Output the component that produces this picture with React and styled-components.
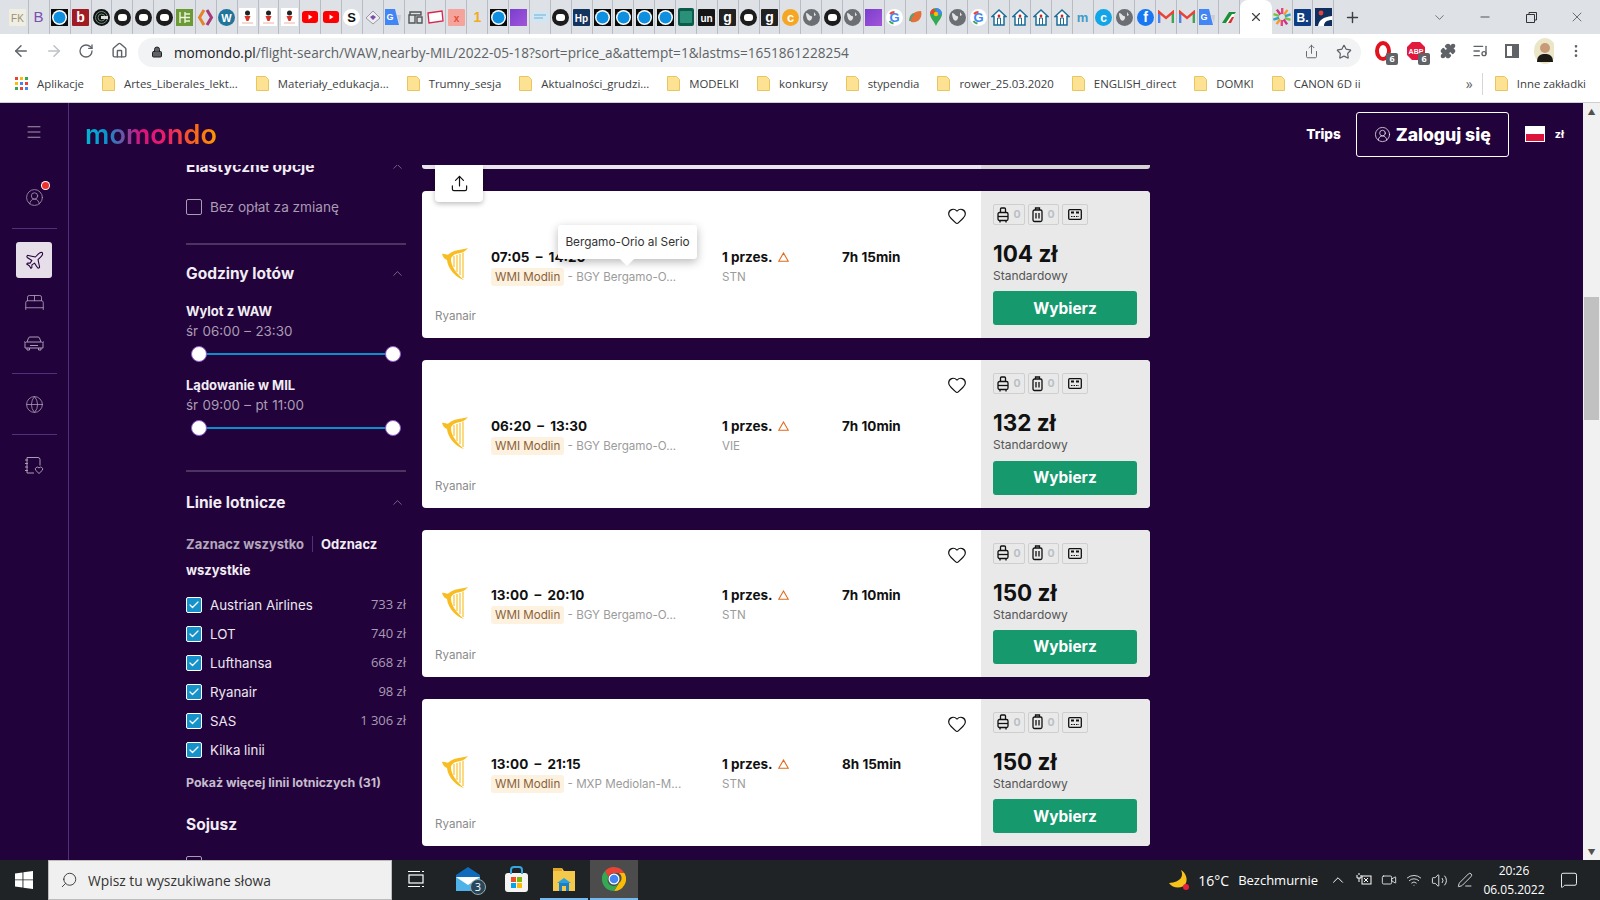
import React from 'react'
import styled, { createGlobalStyle } from 'styled-components'
import {
  ArrowLeft, ArrowRight, RotateCw, Home, Lock, Share, Star, Puzzle, ListMusic, MoreVertical,
  ChevronDown, ChevronUp, Minus, X, Plus, Menu, Plane, BedDouble, Globe, CircleUserRound,
  Heart, Upload, Check, Search, Video, Wifi, Volume2, PenLine, MessageSquare,
} from 'lucide-react'

const UI = `"Open Sans", "Liberation Sans", sans-serif`
const SITE = `Inter, "Liberation Sans", sans-serif`

const Global = createGlobalStyle`
  html, body { margin: 0; padding: 0; height: 100%; overflow: hidden; }
  * { box-sizing: border-box; }
  body { font-family: ${SITE}; }
`

const Shell = styled.div`
  height: 100vh;
  display: flex;
  flex-direction: column;
`

/* ---- browser chrome ---- */
const TabStrip = styled.div`
  height: 34px;
  flex: none;
  background: #dee1e6;
  display: flex;
  align-items: stretch;
  padding-left: 8px;
`
const FavSlot = styled.div`
  width: 20.88px;
  flex: none;
  display: flex;
  align-items: center;
  justify-content: center;
  border-right: 1px solid #b9bcc2;
  svg { display: block; }
`
const ActiveTab = styled.div`
  width: 32px;
  flex: none;
  background: #fff;
  border-radius: 8px 8px 0 0;
  display: flex;
  align-items: center;
  justify-content: center;
  color: #3c4043;
`
const NewTab = styled.div`
  margin-left: 10px;
  display: flex;
  align-items: center;
  color: #3c4043;
`
const WindowBtns = styled.div`
  margin-left: auto;
  display: flex;
  align-items: center;
  color: #333;
`
const WindowBtn = styled.div`
  width: 46px;
  display: flex;
  justify-content: center;
`
const Toolbar = styled.div`
  height: 33px;
  flex: none;
  background: #fff;
  display: flex;
  align-items: center;
  padding-left: 12px;
  color: #5f6368;
`
const NavBtn = styled.div`
  width: 33px;
  flex: none;
  display: flex;
  color: ${({ $off }) => ($off ? '#bdc1c6' : '#5f6368')};
`
const Omnibox = styled.div`
  margin-left: -6px;
  width: 1223px;
  height: 29px;
  margin-top: 3px;
  border-radius: 15px;
  background: #f1f3f4;
  display: flex;
  align-items: center;
  padding: 0 9px 0 13px;
  font: 13.6px ${UI};
  color: #202124;
  flex: none;
`
const Url = styled.div`
  margin-left: 11px;
  white-space: nowrap;
  span { color: #5f6368; }
`
const OmniIcons = styled.div`
  margin-left: auto;
  display: flex;
  gap: 17px;
  color: #5f6368;
`
const ExtRow = styled.div`
  margin-left: 13px;
  display: flex;
  align-items: center;
  gap: 12px;
`
const Ext = styled.div`
  width: 20px;
  height: 20px;
  position: relative;
  display: flex;
  align-items: center;
  justify-content: center;
`
const ExtBadge = styled.span`
  position: absolute;
  right: -4px;
  bottom: -4px;
  width: 12px;
  height: 12px;
  border-radius: 2px;
  background: #5f6368;
  color: #fff;
  font: 700 9px/12px ${UI};
  text-align: center;
`
const Bookmarks = styled.div`
  height: 36px;
  flex: none;
  background: #fff;
  border-bottom: 1px solid #cfd0d3;
  display: flex;
  align-items: center;
  padding: 0 14px 2px 15px;
  font: 11.4px ${UI};
  color: #3c4043;
  white-space: nowrap;
`
const BookmarkItem = styled.div`
  display: flex;
  align-items: center;
  gap: 9px;
  margin-left: ${({ $gap }) => $gap ?? 18}px;
`
const MoreMarks = styled.div`
  margin-left: auto;
  padding-right: 9px;
  border-right: 1px solid #d5d7da;
  font-size: 14px;
  line-height: 22px;
  color: #5f6368;
`

/* ---- page ---- */
const Page = styled.div`
  flex: 1;
  min-height: 0;
  display: flex;
  background: #22023a;
  color: #fff;
`
const Rail = styled.nav`
  width: 69px;
  flex: none;
  border-right: 1px solid #53307a;
  display: flex;
  flex-direction: column;
  align-items: center;
  padding-top: 20px;
  color: #a99cb5;
`
const RailBtn = styled.div`
  width: 36px;
  height: 36px;
  flex: none;
  position: relative;
  display: flex;
  align-items: center;
  justify-content: center;
  border-radius: 3px;
  margin-top: ${({ $mt }) => $mt || 0}px;
  background: ${({ $active }) => ($active ? '#e6dfea' : 'transparent')};
  color: ${({ $active }) => ($active ? '#22023a' : 'inherit')};
`
const RedDot = styled.span`
  position: absolute;
  right: 3px;
  top: 3px;
  width: 7px;
  height: 7px;
  border-radius: 50%;
  background: #f0302a;
  box-shadow: 0 0 0 1px #fff;
`
const RailRule = styled.div`
  width: 45px;
  height: 1px;
  flex: none;
  background: #53307a;
  margin-top: ${({ $mt }) => $mt}px;
`
const Main = styled.div`
  flex: 1;
  min-width: 0;
  display: flex;
  flex-direction: column;
`
const TopBar = styled.header`
  height: 62px;
  flex: none;
  display: flex;
  align-items: center;
  padding: 0 19px 0 16px;
`
const Logo = styled.div`
  font: 600 27px/36px ${SITE};
  letter-spacing: 0.1px;
  margin-top: 2px;
  background: linear-gradient(90deg, #00b8d4 0%, #0f8fc9 17%, #d8127f 42%, #ee1c6d 62%, #f7631c 82%, #ff9a00 100%);
  -webkit-background-clip: text;
  background-clip: text;
  color: transparent;
`
const TopRight = styled.div`
  margin-left: auto;
  display: flex;
  align-items: center;
`
const TripsLink = styled.div`
  font: 800 13.6px ${SITE};
`
const LoginBtn = styled.button`
  width: 153px;
  height: 45px;
  margin-left: 15px;
  border: 1px solid #fff;
  border-radius: 3px;
  background: transparent;
  color: #fff;
  font: 800 17.6px ${SITE};
  display: flex;
  align-items: center;
  justify-content: center;
  gap: 5px;
  white-space: nowrap;
  padding: 0;
`
const Flag = styled.div`
  width: 20px;
  height: 16px;
  margin-left: 16px;
  border: 1px solid #fff;
  background: linear-gradient(#fff 50%, #dc143c 50%);
`
const Currency = styled.div`
  margin-left: 10px;
  font: 700 11px ${SITE};
`
const Scroller = styled.div`
  flex: 1;
  min-height: 0;
  overflow: hidden;
  display: flex;
  align-items: flex-start;
  gap: 16px;
  padding-left: 117px;
`

/* ---- filters ---- */
const Filters = styled.aside`
  width: 220px;
  flex: none;
  display: flex;
  flex-direction: column;
  margin-top: -11px;
`
const SectionHead = styled.div`
  height: 24px;
  flex: none;
  margin-top: ${({ $mt }) => $mt || 0}px;
  display: flex;
  align-items: center;
  justify-content: space-between;
  font-weight: 700;
  font-size: 15.5px;
  color: #f1edf4;
  svg { color: #a99cb5; margin-right: 1px; }
`
const Rule = styled.div`
  height: 2px;
  flex: none;
  background: #4d3361;
  margin-top: ${({ $mt }) => $mt}px;
`
const Box = styled.span`
  width: 16px;
  height: 16px;
  flex: none;
  border-radius: 2px;
  border: 1px solid ${({ $on }) => ($on ? '#fff' : '#a99cb5')};
  background: ${({ $on }) => ($on ? '#1592c9' : 'transparent')};
  display: flex;
  align-items: center;
  justify-content: center;
  color: #fff;
`
const CheckLine = styled.div`
  height: 16px;
  flex: none;
  margin-top: ${({ $mt }) => $mt || 0}px;
  display: flex;
  align-items: center;
  gap: 8px;
  font-size: 13.6px;
  color: #a99cb5;
`
const SubLabel = styled.div`
  height: 20px;
  flex: none;
  margin-top: ${({ $mt }) => $mt || 0}px;
  font: 700 13px/20px ${SITE};
  color: #f1edf4;
`
const Range = styled.div`
  height: 20px;
  flex: none;
  font: 13.4px/20px ${SITE};
  word-spacing: 0.6px;
  color: #a99cb5;
`
const Slider = styled.div`
  height: 16px;
  flex: none;
  margin-top: ${({ $mt }) => $mt}px;
  padding: 0 5px;
  display: flex;
  align-items: center;
  justify-content: space-between;
  background: linear-gradient(#0a8fce, #0a8fce) center / calc(100% - 20px) 2px no-repeat;
`
const Knob = styled.span`
  width: 16px;
  height: 16px;
  border-radius: 50%;
  background: #fff;
  border: 1px solid #8e5cc4;
`
const SelectLinks = styled.div`
  margin-top: 17px;
  font: 700 13px/26px ${SITE};
  color: #f1edf4;
  span { color: #b3a7bc; padding-right: 8px; margin-right: 8px; border-right: 1px solid #53307a; }
`
const AirlineList = styled.div`
  margin-top: 8px;
  display: flex;
  flex-direction: column;
`
const AirlineRow = styled.div`
  height: 28.9px;
  display: flex;
  align-items: center;
  gap: 8px;
  font-size: 13.3px;
  color: #ece7f0;
`
const AirlinePrice = styled.span`
  margin-left: auto;
  color: #a99cb5;
  font: 13px ${UI};
  margin-top: -2px;
`
const MoreAirlines = styled.div`
  margin-top: 9px;
  height: 20px;
  flex: none;
  font: 700 12.4px/20px ${SITE};
  color: #c5bccd;
`

/* ---- results ---- */
const Results = styled.section`
  width: 728px;
  flex: none;
  position: relative;
  display: flex;
  flex-direction: column;
  gap: 22px;
`
const CutCard = styled.div`
  height: 4px;
  flex: none;
  border-radius: 0 0 3px 3px;
  background: linear-gradient(90deg, #e8e6ec 0, #e8e6ec 559px, #d4d4d4 559px);
`
const ShareTab = styled.div`
  position: absolute;
  z-index: 3;
  top: 0;
  left: 13px;
  width: 48px;
  height: 37px;
  background: #fff;
  border-radius: 0 0 4px 4px;
  box-shadow: 0 2px 5px rgba(0, 0, 0, 0.25);
  display: flex;
  align-items: center;
  justify-content: center;
  color: #111;
`
const Card = styled.article`
  height: 147.33px;
  flex: none;
  display: flex;
  position: relative;
  background: #fff;
  border-radius: 4px;
  overflow: visible;
  color: #111;
`
const CardLeft = styled.div`
  flex: 1;
  min-width: 0;
  display: flex;
  flex-direction: column;
  padding: 15px 14px 15px 13px;
`
const HeartRow = styled.div`
  height: 20px;
  flex: none;
  display: flex;
  justify-content: flex-end;
  color: #111;
`
const FlightRow = styled.div`
  margin-top: 21px;
  display: grid;
  grid-template-columns: 56px 231px 120px 1fr;
  align-items: start;
`
const HarpBox = styled.div`
  padding-left: 6px;
  height: 34px;
`
const Strong = styled.div`
  font: 700 13.5px/20px ${SITE};
  word-spacing: ${({ $wide }) => ($wide ? 3 : 0)}px;
  color: #111;
  display: flex;
  align-items: center;
  gap: 3px;
  white-space: pre;
  margin-top: -0.5px;
`
const Sub = styled.div`
  font: 11.6px/20px ${SITE};
  color: #9b9b9b;
  white-space: nowrap;
`
const Tag = styled.span`
  display: inline-block;
  height: 18px;
  line-height: 18px;
  padding: 0 4px;
  border-radius: 3px;
  background: #fdf1e0;
  color: #8a6238;
`
const Carrier = styled.div`
  margin-top: auto;
  font: 11.6px/14px ${SITE};
  color: #8a8a8a;
`
const Tooltip = styled.div`
  position: absolute;
  z-index: 2;
  left: 136px;
  top: 34px;
  width: 139px;
  height: 34px;
  background: #fff;
  border-radius: 3px;
  box-shadow: 0 3px 10px rgba(0, 0, 0, 0.28);
  font: 11.8px/34px ${SITE};
  color: #333;
  text-align: center;
  white-space: nowrap;
  &::after {
    content: '';
    position: absolute;
    left: 64px;
    bottom: -5px;
    width: 10px;
    height: 10px;
    background: #fff;
    transform: rotate(45deg);
  }
`
const PricePane = styled.div`
  width: 169px;
  flex: none;
  background: #e9e9e9;
  border-radius: 0 4px 4px 0;
  display: flex;
  flex-direction: column;
  padding: 13px 13px 13px 12px;
`
const Chips = styled.div`
  display: flex;
  gap: 3px;
`
const Chip = styled.div`
  height: 21px;
  width: ${({ $w }) => $w}px;
  border: 1px solid #cfcfcf;
  border-radius: 2px;
  display: flex;
  align-items: center;
  justify-content: center;
  gap: 4px;
  font: 700 10.5px ${SITE};
  color: #b9bfc4;
`
const Price = styled.div`
  margin-top: 15px;
  font: 700 22.5px/28px ${SITE};
  color: #111;
`
const FareName = styled.div`
  font: 12px/16px ${SITE};
  color: #555;
`
const Choose = styled.button`
  margin-top: auto;
  height: 34px;
  border: 0;
  border-radius: 3px;
  background: #17996e;
  color: #fff;
  font: 700 15.4px ${SITE};
`
const Scrollbar = styled.div`
  width: 17px;
  flex: none;
  background: #f1f1f1;
  display: flex;
  flex-direction: column;
  align-items: center;
  color: #505050;
`
const ScrollArrow = styled.div`
  height: 17px;
  flex: none;
  display: flex;
  align-items: center;
  justify-content: center;
  margin-top: ${({ $end }) => ($end ? 'auto' : '0')};
  font-size: 8px;
`
const ScrollThumb = styled.div`
  width: 15px;
  height: 123px;
  flex: none;
  margin-top: 177px;
  background: #c1c1c1;
`

/* ---- taskbar ---- */
const Taskbar = styled.footer`
  height: 40px;
  flex: none;
  background: #202326;
  display: flex;
  align-items: stretch;
  color: #fff;
  font: 14px ${UI};
`
const StartBtn = styled.div`
  width: 48px;
  flex: none;
  display: flex;
  align-items: center;
  justify-content: center;
`
const SearchBox = styled.div`
  width: 344px;
  flex: none;
  background: #f0f0f0;
  border: 1px solid #bcbcbc;
  display: flex;
  align-items: center;
  gap: 10px;
  padding-left: 11px;
  font-size: 13.8px;
  color: #333;
  svg { transform: scaleX(-1); }
`
const TaskItem = styled.div`
  width: ${({ $w }) => $w || 48}px;
  margin-left: ${({ $ml }) => $ml || 0}px;
  flex: none;
  position: relative;
  display: flex;
  align-items: center;
  justify-content: center;
  background: ${({ $active }) => ($active ? '#4c4c4c' : 'transparent')};
  border-bottom: 2px solid ${({ $open }) => ($open ? '#76b9ed' : 'transparent')};
`
const MailCount = styled.span`
  position: absolute;
  right: 6px;
  bottom: 3px;
  width: 16px;
  height: 16px;
  border-radius: 50%;
  border: 1px solid #9aa;
  background: #27475c;
  font: 11px/14px ${UI};
  text-align: center;
`
const Tray = styled.div`
  margin-left: auto;
  display: flex;
  align-items: center;
  white-space: nowrap;
`
const Weather = styled.div`
  display: flex;
  align-items: center;
  gap: 8px;
  margin-right: 11px;
  span { font-size: 13px; margin-left: 1px; }
`
const TrayIcons = styled.div`
  display: flex;
  align-items: center;
  gap: 9px;
`
const Clock = styled.div`
  width: 76px;
  margin-left: 3px;
  text-align: center;
  font: 12px/19px ${UI};
`
const Notify = styled.div`
  width: 48px;
  display: flex;
  justify-content: center;
  padding-right: 14px;
`

/* ---- drawings ---- */
const Ball = () => (
  <svg width="17" height="17"><rect width="17" height="17" fill="#0b0b0b" /><circle cx="8.5" cy="8.5" r="7.500" fill="#fff" /><circle cx="8.500" cy="8.500" r="6" fill="#0f8fe0" /></svg>
)
const Ring = () => (
  <svg width="17" height="17"><circle cx="8.500" cy="8.500" r="8.500" fill="#1c1c1c" /><rect x="4" y="5" width="9" height="7" rx="3" fill="#fff" /></svg>
)
const Concentric = () => (
  <svg width="17" height="17" fill="none"><circle cx="8.500" cy="8.500" r="8.500" fill="#111" /><circle cx="8.500" cy="8.500" r="6" stroke="#6d8f80" /><circle cx="8.500" cy="8.500" r="3.500" stroke="#6d8f80" /><rect x="8" y="7" width="7" height="3" fill="#ddd" /></svg>
)
const Letter = ({ bg, fg = '#fff', t, round, size = 11, weight = 700 }) => (
  <svg width="17" height="17">
    <rect width="17" height="17" rx={round ? 8.5 : 1} fill={bg} />
    <text x="8.500" y="12.500" textAnchor="middle" fontSize={size} fontWeight={weight} fontFamily="Liberation Sans" fill={fg}>{t}</text>
  </svg>
)
const HouseFav = () => (
  <svg width="16" height="17" viewBox="0 0 16 17"><path d="M8 1 1 7.5h2V16h10V7.5h2z" fill="#fff" stroke="#1c6e96" strokeWidth="1.5" /><path d="M6.5 16V9h3v7" fill="none" stroke="#1c6e96" /><circle cx="8" cy="7" r="1.4" fill="#e02020" /></svg>
)
const GlobeFav = () => (
  <svg width="17" height="17"><circle cx="8.500" cy="8.500" r="8.500" fill="#6b6f73" /><path d="M3 4c3 0 3 3 5 3s1 3 0 4-2 1-3 0-2-4-2-7zM11 3l2 3-2 1z" fill="#e3e3e3" /></svg>
)
const YouTube = () => (
  <svg width="16" height="16"><rect y="2" width="16" height="12" rx="3" fill="#f00" /><path d="m6.5 5.5 4 2.5-4 2.5z" fill="#fff" /></svg>
)
const Figure = () => (
  <svg width="17" height="18"><rect width="17" height="18" fill="#fff" /><circle cx="8.500" cy="5" r="2.500" fill="#222" /><path d="M5.500 8h6l-2 5h-2z" fill="#d5332a" /><path d="M3 15h11" stroke="#e8b3a0" /></svg>
)
const GColor = () => (
  <svg width="17" height="17"><circle cx="8.500" cy="8.500" r="8.500" fill="#fff" /><text x="8.500" y="13" textAnchor="middle" fontSize="13" fontWeight="700" fontFamily="Liberation Sans" fill="#4285f4">G</text><path d="M4 5A6 6 0 0 1 8.500 3" stroke="#ea4335" strokeWidth="2" fill="none" /><path d="M3.500 12A6 6 0 0 0 7.500 14.500" stroke="#34a853" strokeWidth="2" fill="none" /></svg>
)
const Translate = () => (
  <svg width="18" height="16"><path d="M0 0h10l4 16H0z" fill="#4285f4" /><text x="5" y="11" textAnchor="middle" fontSize="9" fontWeight="700" fontFamily="Liberation Sans" fill="#fff">G</text><path d="m12 6 4 0-1 8z" fill="#c8cdd4" /></svg>
)
const Gmail = () => (
  <svg width="16" height="14"><path d="M1 13V2l7 6 7-6v11" fill="none" stroke="#ea4335" strokeWidth="2.4" /><path d="M1 13V4" stroke="#4285f4" strokeWidth="2.4" /><path d="M15 13V4" stroke="#34a853" strokeWidth="2.4" /></svg>
)

const favicon = {
  fk: <Letter bg="#f0ede2" fg="#9a9274" t="FK" size={10} weight={400} />,
  b3: <Letter bg="transparent" fg="#7a4fb0" t="B" size={15} weight={400} />,
  blue: <Ball />,
  bred: <Letter bg="#a01c24" t="b" size={14} />,
  dark: <Concentric />,
  blk: <Ring />,
  h: (
    <svg width="17" height="17" fill="none" stroke="#eef3dc" strokeWidth="1.400"><rect width="17" height="17" fill="#6b9a36" stroke="none" /><path d="M4 3v11M9 3v11M4 8.500h5M9 5h5M9 8.500h5M9 12h5" /></svg>
  ),
  brack: <svg width="17" height="17" fill="none" strokeWidth="3"><path d="M7 1 2.500 8.500 7 16" stroke="#e6822a" /><path d="m10 1 4.500 7.500L10 16" stroke="#a8397a" /></svg>,
  wp: <Letter bg="#21759b" t="W" size={11} round />,
  fig: <Figure />,
  yt: <YouTube />,
  s: <Letter bg="#fff" fg="#111" t="S" size={13} round />,
  roof: <svg width="16" height="16"><path d="M8 2 1 9l7 6 7-6z" fill="#eee" stroke="#99a" /><path d="m5 8 3 3 3-3-3-2z" fill="#7d4dac" /></svg>,
  gt: <Translate />,
  doc: <svg width="16" height="16" fill="none" stroke="#555" strokeWidth="1.4"><path d="M3 3h11v3H3zM2 6h6v8H2zM10 8h5v6h-5z" /></svg>,
  redr: <svg width="17" height="14"><path d="M1 3 15 1l1 10-14 2z" fill="#fff" stroke="#d8254a" strokeWidth="1.3" /></svg>,
  pink: <Letter bg="#f4a49a" fg="#e64a3a" t="x" size={10} />,
  one: <Letter bg="transparent" fg="#f3ab1b" t="1" size={14} />,
  purple: <svg width="17" height="17"><defs><linearGradient id="pg" x1="0" y1="0" x2="1" y2="1"><stop stopColor="#7a3ed0" /><stop offset="1" stopColor="#a155d8" /></linearGradient></defs><rect width="17" height="17" fill="url(#pg)" /></svg>,
  pale: <svg width="16" height="10"><rect width="16" height="10" fill="#cfe6f5" /><path d="M2 3h12M2 6h9" stroke="#76aed0" /></svg>,
  hp: <Letter bg="#12345f" t="Hp" size={10} />,
  green: <svg width="16" height="18"><rect width="16" height="18" rx="2" fill="#0d5a4a" /><rect x="2" y="3" width="12" height="12" rx="1" fill="#2a9078" /></svg>,
  un: <Letter bg="#151515" t="un" size={10} />,
  g: <Letter bg="#222" t="g" size={14} />,
  oc: <Letter bg="#f5a623" fg="#fff" t="c" size={13} round />,
  globe: <GlobeFav />,
  gc: <GColor />,
  leaf: <svg width="16" height="16"><path d="M3 13C0 8 5 2 13 2c2 6-3 13-10 11z" fill="#e2703a" /><path d="M2 12c0-3 2-6 4-7" stroke="#5a9e6f" strokeWidth="2" fill="none" /></svg>,
  pin: <svg width="14" height="18"><path d="M7 0a6 6 0 0 1 6 6c0 4-4 7-6 12C5 13 1 10 1 6a6 6 0 0 1 6-6z" fill="#34a853" /><path d="M7 0a6 6 0 0 1 6 6L7 8z" fill="#4285f4" /><path d="M1 6a6 6 0 0 1 4-5.5L7 6z" fill="#ea4335" /><circle cx="7" cy="6" r="2.2" fill="#fbbc04" /></svg>,
  house: <HouseFav />,
  m: <Letter bg="transparent" fg="#3f9bc8" t="m" size={13} />,
  cb: <Letter bg="#12a5e8" t="c" size={12} round />,
  fb: <Letter bg="#1877f2" t="f" size={14} round />,
  gm: <Gmail />,
  train: <svg width="17" height="15"><path d="M2 13 9 2h7L7 13z" fill="#1b8f3a" /><path d="M6 13 12 4h3L9 13z" fill="#fff" /><path d="M8 13l4-6h2l-3 6z" fill="#d92b2b" /></svg>,
  flower: <svg width="18" height="18">{Array.from({ length: 10 }).map((_, i) => <rect key={i} x="8" y="0" width="2.4" height="6" fill={['#e8447a', '#f79a2c', '#2fa7c9', '#7bc043', '#d02f8a'][i % 5]} transform={`rotate(${i * 36} 9 9)`} />)}</svg>,
  bk: <Letter bg="#0d3c82" t="B." size={12} />,
  navy: <svg width="17" height="18"><rect width="17" height="18" fill="#0f2f5e" /><circle cx="6" cy="5" r="2.4" fill="#e8433a" /><path d="M3 18c1-6 5-9 14-10v4c-5 0-8 2-8 6z" fill="#fff" /></svg>,
}

const tabs = 'fk b3 blue bred dark blk blk blk h brack wp fig fig fig yt yt s roof gt doc redr pink one blue purple pale blk hp blue blue blue blue green un g blk g oc globe blk globe purple gc leaf pin globe gc house house house house m cb globe fb gm gm gt train'.split(' ')

const Folder = () => (
  <svg width="13" height="17" viewBox="0 0 13 17"><path d="M.5 1.5h9l3 3v11H.5z" fill="#fde293" stroke="#e8c65f" /></svg>
)
const AppsGrid = () => (
  <svg width="13" height="13">
    {['#ea4335', '#fbbc04', '#34a853', '#fbbc04', '#4285f4', '#ea4335', '#34a853', '#ea4335', '#4285f4'].map((c, i) => (
      <rect key={i} x={(i % 3) * 5} y={Math.floor(i / 3) * 5} width="3" height="3" fill={c} />
    ))}
  </svg>
)
const Opera = () => (
  <svg width="18" height="20"><ellipse cx="8" cy="10" rx="6" ry="8" fill="none" stroke="#e0141f" strokeWidth="4" /></svg>
)
const Abp = () => (
  <svg width="20" height="20"><path d="M6 1h8l5 5v8l-5 5H6l-5-5V6z" fill="#e2183c" /><text x="10" y="13" textAnchor="middle" fontSize="7" fontWeight="700" fontFamily="Liberation Sans" fill="#fff">ABP</text></svg>
)
const SidePanel = () => (
  <svg width="16" height="16" fill="none" stroke="#5f6368" strokeWidth="2"><rect x="2" y="2" width="12" height="12" /><rect x="9" y="2" width="5" height="12" fill="#5f6368" /></svg>
)
const Avatar = () => (
  <svg width="22" height="26"><ellipse cx="11" cy="13" rx="11" ry="13" fill="#ece6c9" /><circle cx="11" cy="10" r="5" fill="#c89a78" /><path d="M3 24c0-7 4-8 8-8s8 1 8 8z" fill="#1d1a16" /></svg>
)
const TripsIcon = () => (
  <svg width="20" height="20" viewBox="0 0 20 20" fill="none" stroke="currentColor" strokeWidth="1">
    <path d="M3 2.5h11a2 2 0 0 1 2 2v6M3 2.5V18h7" />
    <path d="M1 5h3M1 8.5h3M1 12h3M1 15.500h3" />
    <path d="M15 18.500l-3.300-3.200a2 2 0 0 1 3.300-2.300 2 2 0 0 1 3.300 2.300z" />
  </svg>
)
const FrontCar = () => (
  <svg width="20" height="15" viewBox="0 0 20 15" fill="none" stroke="currentColor" strokeWidth="1">
    <path d="M3 6 4.500 2a1.500 1.500 0 0 1 1.400-1h8.200a1.500 1.500 0 0 1 1.400 1L17 6" />
    <path d="M1 7.500A1.500 1.500 0 0 1 2.500 6h15A1.500 1.500 0 0 1 19 7.500V12H1z" />
    <path d="M3 12v2h2.500v-2M14.500 12v2H17v-2M6 9.500h8M1 6H0M19 6h1" />
  </svg>
)
const Harp = () => (
  <svg width="28" height="34" viewBox="0 0 28 34">
    <path d="M1 7C4 6 6 9 8 7 12 3 20 3 27 1c-3 4-7 5-12 6-3 1-5 3-5 5 0 7 5 14 13 21C16 31 7 23 6 13 3 12 2 10 1 7z" fill="#f7bd22" />
    <path d="M13 9v11M16 8v17M19 7v21M22 5.500V31" stroke="#f9cf5c" strokeWidth="1.500" fill="none" />
  </svg>
)
const CabinBag = () => (
  <svg width="12" height="16" viewBox="0 0 12 16" fill="none" stroke="#111" strokeWidth="1.300"><path d="M3.500 5.500V2a1 1 0 0 1 1-1h3a1 1 0 0 1 1 1v3.500" /><rect x="1" y="5.500" width="10" height="8" rx="1.500" /><path d="M1 9.500h10" /><path d="M3 14v1.500M9 14v1.500" /></svg>
)
const HoldBag = () => (
  <svg width="11" height="16" viewBox="0 0 11 16" fill="none" stroke="#111" strokeWidth="1.300"><path d="M3.500 3V1h4v2" /><rect x="1" y="3" width="9" height="11.500" rx="1.500" /><path d="M4 6v5.500M7 6v5.500" /></svg>
)
const SeatIcon = () => (
  <svg width="14" height="11" viewBox="0 0 14 11"><rect x=".7" y=".7" width="12.600" height="9.600" rx="1" fill="none" stroke="#111" strokeWidth="1.300" /><path d="M3 3.500h3M8 3.500h3" stroke="#111" strokeWidth="1.800" /><path d="M3 7.500h8" stroke="#111" strokeDasharray="1.500 1" /></svg>
)
const WarnIcon = () => (
  <svg width="11" height="10" viewBox="0 0 11 10"><path d="M5.500 1 10.300 9.300H.7z" fill="none" stroke="#e0691a" strokeWidth="1.100" /></svg>
)
const WinLogo = () => (
  <svg width="18" height="18" viewBox="0 0 18 18" fill="#fff"><path d="M0 2.500 7.500 1.400v7H0zM8.400 1.300 18 0v8.400H8.400zM0 9.300h7.500v7.200L0 15.500zM8.400 9.300H18V18l-9.600-1.300z" /></svg>
)
const TaskView = () => (
  <svg width="16" height="20" fill="none" stroke="#fff" strokeWidth="1.200"><path d="M0 2.500h12M14 2.500h2M0 17.500h12M14 17.500h2" /><rect x="1" y="6" width="14" height="8" /></svg>
)
const Mail = () => (
  <svg width="24" height="24"><path d="M0 8 12 0l12 8v16H0z" fill="#0f6cbd" /><path d="M0 10h24v14H0z" fill="#4fb3ea" /><path d="m0 10 12 8 12-8" fill="#fff" /></svg>
)
const Store = () => (
  <svg width="23" height="26"><rect y="7" width="23" height="19" rx="3" fill="#f4f4f4" /><path d="M6 8V4a3 3 0 0 1 3-3h5a3 3 0 0 1 3 3v4" fill="none" stroke="#35a7e0" strokeWidth="2" /><rect x="6" y="11" width="5" height="5" fill="#f25022" /><rect x="12" y="11" width="5" height="5" fill="#7fba00" /><rect x="6" y="17" width="5" height="5" fill="#00a4ef" /><rect x="12" y="17" width="5" height="5" fill="#ffb900" /></svg>
)
const Explorer = () => (
  <svg width="22" height="24"><path d="M0 1h9l2 3h11v20H0z" fill="#f4c84a" /><path d="M0 1h9v3H0z" fill="#e2a52c" /><rect x="6" y="16" width="10" height="8" fill="#1d7ec4" /><rect x="9" y="19" width="4" height="5" fill="#f4c84a" /><path d="M4 16 11 11l7 5z" fill="#2aa0e0" /></svg>
)
const Chrome = () => (
  <svg width="24" height="24" viewBox="0 0 24 24">
    <path d="M12 0a12 12 0 0 1 10.400 6H12a6 6 0 0 0-5.600 4L3 4a12 12 0 0 1 9-4z" fill="#ea4335" />
    <path d="M22.400 6A12 12 0 0 1 12 24l5-8a6 6 0 0 0-.2-10z" fill="#fbbc04" />
    <path d="M3 4a12 12 0 0 0 9 20l5-8a6 6 0 0 1-10.600-6z" fill="#34a853" />
    <circle cx="12" cy="12" r="5.500" fill="#fff" /><circle cx="12" cy="12" r="4.300" fill="#4285f4" />
  </svg>
)
const Moon = () => (
  <svg width="22" height="22" viewBox="0 0 22 22"><path d="M13 1c3 6 0 12-12 13 4 6 14 6 17 0 2-5-1-11-5-13z" fill="#f7c21c" /><circle cx="18" cy="18" r="3" fill="#e81f3c" /></svg>
)
const Battery = () => (
  <svg width="16" height="14" fill="none" stroke="#fff"><path d="M1 2v3h4V2M3 5v4M3 0v2" /><rect x="6" y="3" width="9" height="8" /><path d="m8 5 4 4m0-4-4 4" /></svg>
)

const airlines = [
  ['Austrian Airlines', '733 zł'],
  ['LOT', '740 zł'],
  ['Lufthansa', '668 zł'],
  ['Ryanair', '98 zł'],
  ['SAS', '1 306 zł'],
  ['Kilka linii', ''],
]
const flights = [
  { time: '07:05 – 14:20', to: 'BGY Bergamo-O...', via: 'STN', dur: '7h 15min', price: '104 zł', tip: true },
  { time: '06:20 – 13:30', to: 'BGY Bergamo-O...', via: 'VIE', dur: '7h 10min', price: '132 zł' },
  { time: '13:00 – 20:10', to: 'BGY Bergamo-O...', via: 'STN', dur: '7h 10min', price: '150 zł' },
  { time: '13:00 – 21:15', to: 'MXP Mediolan-M...', via: 'STN', dur: '8h 15min', price: '150 zł' },
]
const marks = [
  'Artes_Liberales_lekt...', 'Materiały_edukacja...', 'Trumny_sesja', 'Aktualności_grudzi...', 'MODELKI',
  'konkursy', 'stypendia', 'rower_25.03.2020', 'ENGLISH_direct', 'DOMKI', 'CANON 6D ii',
]

const FlightCard = ({ f }) => (
  <Card>
    <CardLeft>
      <HeartRow><Heart size={20} strokeWidth={1.4} /></HeartRow>
      <FlightRow>
        <HarpBox><Harp /></HarpBox>
        <div>
          <Strong $wide>{f.time}</Strong>
          <Sub><Tag>WMI Modlin</Tag> - {f.to}</Sub>
        </div>
        <div>
          <Strong>1 przes. <WarnIcon /></Strong>
          <Sub>{f.via}</Sub>
        </div>
        <Strong>{f.dur}</Strong>
      </FlightRow>
      <Carrier>Ryanair</Carrier>
    </CardLeft>
    {f.tip && <Tooltip>Bergamo-Orio al Serio</Tooltip>}
    <PricePane>
      <Chips>
        <Chip $w={32}><CabinBag />0</Chip>
        <Chip $w={31}><HoldBag />0</Chip>
        <Chip $w={26}><SeatIcon /></Chip>
      </Chips>
      <Price>{f.price}</Price>
      <FareName>Standardowy</FareName>
      <Choose>Wybierz</Choose>
    </PricePane>
  </Card>
)

const App = () => (
  <Shell>
    <Global />
    <TabStrip>
      {tabs.map((t, i) => <FavSlot key={i}>{favicon[t]}</FavSlot>)}
      <ActiveTab><X size={14} strokeWidth={2} /></ActiveTab>
      <FavSlot>{favicon.flower}</FavSlot>
      <FavSlot>{favicon.bk}</FavSlot>
      <FavSlot>{favicon.navy}</FavSlot>
      <NewTab><Plus size={17} strokeWidth={2} /></NewTab>
      <WindowBtns>
        <WindowBtn><ChevronDown size={15} strokeWidth={1} /></WindowBtn>
        <WindowBtn><Minus size={14} strokeWidth={1.4} /></WindowBtn>
        <WindowBtn>
          <svg width="11" height="11" fill="none" stroke="#333"><path d="M3 2.500V.5h7.500V8H8.500M.5 2.500h8v8h-8z" /></svg>
        </WindowBtn>
        <WindowBtn><X size={16} strokeWidth={1} /></WindowBtn>
      </WindowBtns>
    </TabStrip>
    <Toolbar>
      <NavBtn><ArrowLeft size={18} /></NavBtn>
      <NavBtn $off><ArrowRight size={18} /></NavBtn>
      <NavBtn><RotateCw size={16} /></NavBtn>
      <NavBtn><Home size={17} /></NavBtn>
      <Omnibox>
        <Lock size={12} fill="#5f6368" />
        <Url>momondo.pl<span>/flight-search/WAW,nearby-MIL/2022-05-18?sort=price_a&attempt=1&lastms=1651861228254</span></Url>
        <OmniIcons>
          <Share size={15} strokeWidth={1.5} />
          <Star size={16} strokeWidth={1.8} />
        </OmniIcons>
      </Omnibox>
      <ExtRow>
        <Ext><Opera /><ExtBadge>6</ExtBadge></Ext>
        <Ext><Abp /><ExtBadge>6</ExtBadge></Ext>
        <Ext><Puzzle size={16} fill="#5f6368" /></Ext>
        <Ext><ListMusic size={16} /></Ext>
        <Ext><SidePanel /></Ext>
        <Ext><Avatar /></Ext>
        <Ext><MoreVertical size={16} /></Ext>
      </ExtRow>
    </Toolbar>
    <Bookmarks>
      <BookmarkItem $gap={0}><AppsGrid />Aplikacje</BookmarkItem>
      {marks.map(label => (
        <BookmarkItem key={label}><Folder />{label}</BookmarkItem>
      ))}
      <MoreMarks>»</MoreMarks>
      <BookmarkItem $gap={12}><Folder />Inne zakładki</BookmarkItem>
    </Bookmarks>
    <Page>
      <Rail>
        <Menu size={18} strokeWidth={1.3} />
        <RailBtn $mt={38}><CircleUserRound size={19} strokeWidth={1} /><RedDot /></RailBtn>
        <RailRule $mt={13} />
        <RailBtn $active $mt={13}><Plane size={21} strokeWidth={1.2} /></RailBtn>
        <RailBtn $mt={6}><BedDouble size={21} strokeWidth={1} /></RailBtn>
        <RailBtn $mt={5}><FrontCar /></RailBtn>
        <RailRule $mt={12} />
        <RailBtn $mt={12}><Globe size={19} strokeWidth={1} /></RailBtn>
        <RailRule $mt={12} />
        <RailBtn $mt={12}><TripsIcon /></RailBtn>
      </Rail>
      <Main>
        <TopBar>
          <Logo>momondo</Logo>
          <TopRight>
            <TripsLink>Trips</TripsLink>
            <LoginBtn><CircleUserRound size={17} strokeWidth={1} />Zaloguj się</LoginBtn>
            <Flag />
            <Currency>zł</Currency>
          </TopRight>
        </TopBar>
        <Scroller>
          <Filters>
            <SectionHead>Elastyczne opcje<ChevronUp size={15} strokeWidth={1} /></SectionHead>
            <CheckLine $mt={21}><Box />Bez opłat za zmianę</CheckLine>
            <Rule $mt={28} />
            <SectionHead $mt={16}>Godziny lotów<ChevronUp size={15} strokeWidth={1} /></SectionHead>
            <SubLabel $mt={16}>Wylot z WAW</SubLabel>
            <Range>śr 06:00 – 23:30</Range>
            <Slider $mt={5}><Knob /><Knob /></Slider>
            <SubLabel $mt={13}>Lądowanie w MIL</SubLabel>
            <Range>śr 09:00 – pt 11:00</Range>
            <Slider $mt={5}><Knob /><Knob /></Slider>
            <Rule $mt={34} />
            <SectionHead $mt={18}>Linie lotnicze<ChevronUp size={15} strokeWidth={1} /></SectionHead>
            <SelectLinks><span>Zaznacz wszystko</span>Odznacz wszystkie</SelectLinks>
            <AirlineList>
              {airlines.map(([name, price]) => (
                <AirlineRow key={name}>
                  <Box $on><Check size={12} strokeWidth={2.5} /></Box>
                  {name}
                  <AirlinePrice>{price}</AirlinePrice>
                </AirlineRow>
              ))}
            </AirlineList>
            <MoreAirlines>Pokaż więcej linii lotniczych (31)</MoreAirlines>
            <SectionHead $mt={19}>Sojusz</SectionHead>
            <CheckLine $mt={20}><Box /></CheckLine>
          </Filters>
          <Results>
            <CutCard />
            <ShareTab><Upload size={19} strokeWidth={1.5} /></ShareTab>
            {flights.map(f => <FlightCard key={f.time} f={f} />)}
          </Results>
        </Scroller>
      </Main>
      <Scrollbar>
        <ScrollArrow>▲</ScrollArrow>
        <ScrollThumb />
        <ScrollArrow $end>▼</ScrollArrow>
      </Scrollbar>
    </Page>
    <Taskbar>
      <StartBtn><WinLogo /></StartBtn>
      <SearchBox><Search size={18} strokeWidth={1.2} />Wpisz tu wyszukiwane słowa</SearchBox>
      <TaskItem><TaskView /></TaskItem>
      <TaskItem $ml={4}><Mail /><MailCount>3</MailCount></TaskItem>
      <TaskItem><Store /></TaskItem>
      <TaskItem $open><Explorer /></TaskItem>
      <TaskItem $active $open $ml={2}><Chrome /></TaskItem>
      <Tray>
        <Weather><Moon />16°C<span>Bezchmurnie</span></Weather>
        <TrayIcons>
          <ChevronUp size={18} strokeWidth={1.3} />
          <Battery />
          <Video size={16} strokeWidth={1.2} />
          <Wifi size={16} strokeWidth={1.2} />
          <Volume2 size={17} strokeWidth={1.2} />
          <PenLine size={16} strokeWidth={1.2} />
        </TrayIcons>
        <Clock>20:26<br />06.05.2022</Clock>
        <Notify><MessageSquare size={18} strokeWidth={1.2} /></Notify>
      </Tray>
    </Taskbar>
  </Shell>
)

export default App
